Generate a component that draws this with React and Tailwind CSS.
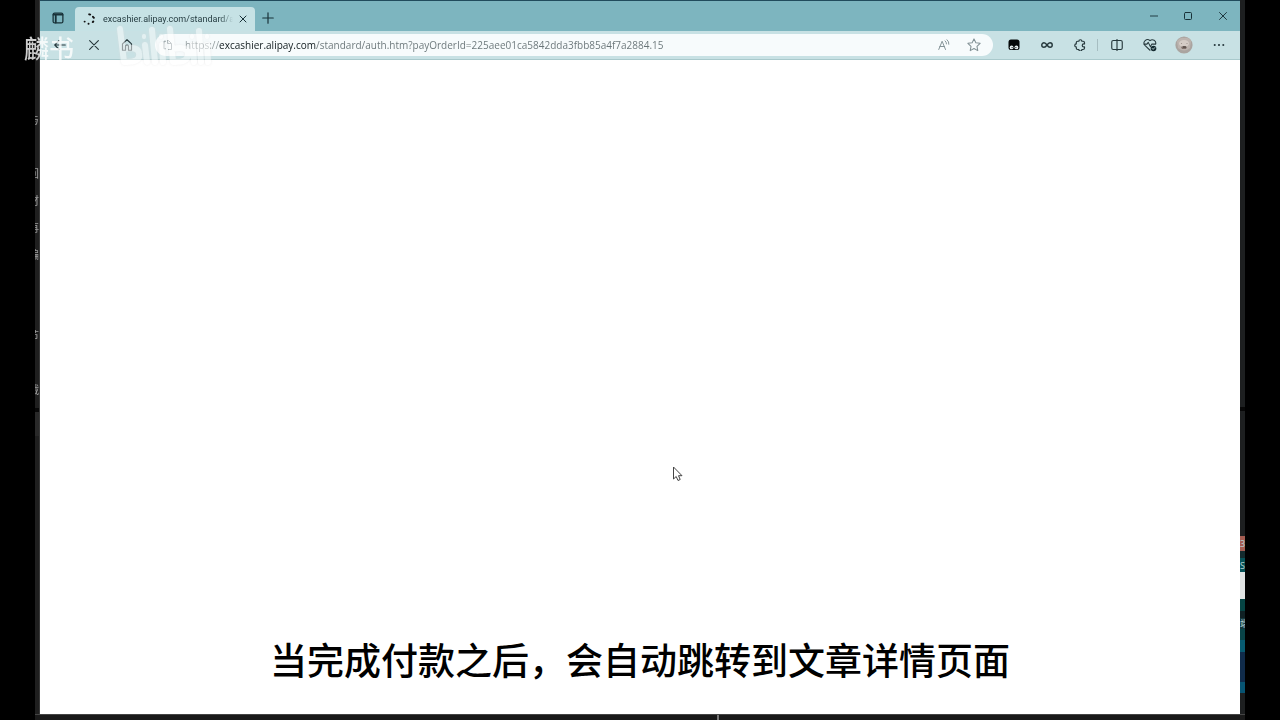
import React from "react";

const sideRows = ["与", "", "回", "材", "再", "骗", "", "", "节", "", "哦"];

function Icon({ size = "size-3.5", box = "0 0 16 16", children, width = 1.2 }) {
  return (
    <svg
      className={`${size} shrink-0`}
      viewBox={box}
      fill="none"
      stroke="currentColor"
      strokeWidth={width}
      strokeLinecap="round"
      strokeLinejoin="round"
      aria-hidden="true"
    >
      {children}
    </svg>
  );
}

function IconButton({ label, className = "w-[34px]", children }) {
  return (
    <button type="button" aria-label={label} className={`flex h-full shrink-0 items-center justify-center ${className}`}>
      {children}
    </button>
  );
}

function LeftEdge() {
  return (
    <aside className="flex w-[5px] shrink-0 flex-col overflow-hidden border-r border-[#383838] bg-[#1f1f1f] pt-[107px] text-[11px] text-[#aaa]">
      {sideRows.map((text, i) => (
        <span key={i} className="flex h-[27px] shrink-0 items-center justify-end opacity-90">
          {text}
        </span>
      ))}
      <span className="mt-1 h-1 shrink-0 bg-[#080808]" />
      <span className="h-6 shrink-0 bg-[#292929]" />
    </aside>
  );
}

function RightEdge() {
  return (
    <aside className="flex w-[5px] shrink-0 flex-col overflow-hidden bg-[#1d1f20] text-[9px] leading-none text-[#b7d3d2]">
      <span className="h-[411px] shrink-0 border-b-4 border-[#070707]" />
      <span className="h-[125px] shrink-0" />
      <span className="flex h-[15px] shrink-0 items-center bg-[#a45d52]">3</span>
      <span className="h-[7px] shrink-0 bg-[#142b2e]" />
      <span className="flex h-[14px] shrink-0 items-center bg-[#075257]">S</span>
      <span className="h-[27px] shrink-0 bg-[#dfe2e2]" />
      <span className="h-[12px] shrink-0 bg-[#064443]" />
      <span className="h-[7px] shrink-0 bg-[#102124]" />
      <span className="flex h-[11px] shrink-0 items-center bg-[#15383c]">端</span>
      <span className="h-[11px] shrink-0 bg-[#094347]" />
      <span className="h-[12px] shrink-0 bg-[#075a70]" />
      <span className="h-[30px] shrink-0 bg-[#102b4a]" />
      <span className="h-[11px] shrink-0 bg-[#075472]" />
    </aside>
  );
}

function TabBar() {
  return (
    <header className="flex h-[31px] shrink-0 items-end border-t border-[#214b5c] bg-[#7db5bf] text-[#193239]">
      <IconButton label="Tab actions" className="w-[35px] pt-1">
        <Icon size="size-3" width={1.7}>
          <rect x="1.5" y="1.5" width="13" height="13" rx="2" />
          <path d="M2 3.6h12M5 5v9" strokeWidth="2.4" />
        </Icon>
      </IconButton>
      <div className="flex h-6 w-[180px] items-center rounded-t bg-[#c6e2e5] pl-2">
        <svg className="size-3 shrink-0" viewBox="0 0 12 12" fill="none" stroke="#111" strokeWidth="1.9" strokeLinecap="round" aria-hidden="true">
          <path d="M6.2 1.3l1 .3M10 3.8l.9 1M10.3 8.4l-.5.7M5.500 10.8h.1M1.6 8.6h.1" />
        </svg>
        <span className="ml-2 w-[130px] overflow-hidden bg-linear-to-r from-[#20373c] from-90% to-[#c6e2e5] bg-clip-text font-['Roboto',sans-serif] text-[9px] leading-4 whitespace-nowrap text-transparent">
          excashier.alipay.com/standard/auth.htm
        </span>
        <IconButton label="Close tab" className="ml-1 w-3">
          <Icon size="size-2" width={2}>
            <path d="M2 2l12 12M14 2L2 14" />
          </Icon>
        </IconButton>
      </div>
      <IconButton label="New tab" className="w-[26px] pt-1">
        <Icon size="size-3" width={1.6}>
          <path d="M8 1v14M1 8h14" />
        </Icon>
      </IconButton>
      <div className="ml-auto flex h-full">
        <IconButton label="Minimize" className="w-[35px]">
          <Icon size="size-2" width={1.8}>
            <path d="M0 8h16" />
          </Icon>
        </IconButton>
        <IconButton label="Maximize" className="w-[34px]">
          <Icon size="size-2" width={2}>
            <rect x="1" y="1" width="14" height="14" rx="2" />
          </Icon>
        </IconButton>
        <IconButton label="Close window" className="w-[35px]">
          <Icon size="size-2" width={1.9}>
            <path d="M1 1l14 14M15 1L1 15" />
          </Icon>
        </IconButton>
      </div>
    </header>
  );
}

function Toolbar() {
  return (
    <nav className="flex h-[29px] shrink-0 items-center border-b border-[#a9c9cc] bg-[#c8e1e4] pl-[3px] text-[#26383c]">
      <IconButton label="Back">
        <Icon size="size-3" width={1.5}>
          <path d="M15 8H1M7 2L1 8l6 6" />
        </Icon>
      </IconButton>
      <IconButton label="Stop" className="w-[33px]">
        <Icon size="size-2.5" width={1.8}>
          <path d="M1 1l14 14M15 1L1 15" />
        </Icon>
      </IconButton>
      <IconButton label="Home" className="w-[33px]">
        <Icon size="size-3" width={1.6}>
          <path d="M2 6.5L8 1l6 5.5V15h-4v-5a2 2 0 0 0-4 0v5H2z" />
        </Icon>
      </IconButton>
      <div className="ml-3 flex h-[22px] min-w-0 flex-1 items-center rounded-full bg-[#f7fbfc] pl-1.5">
        <Icon size="size-3" width={1.3}>
          <path d="M6 3H4v10h2M9 2h1l4 4v8h-4M9 2v4h4" stroke="#8d999c" />
        </Icon>
        <label htmlFor="address" className="sr-only">Address</label>
        <input
          id="address"
          readOnly
          defaultValue="https://excashier.alipay.com/standard/auth.htm?payOrderId=225aee01ca5842dda3fbb85a4f7a2884.15"
          className="ml-3 h-full min-w-0 flex-1 bg-[linear-gradient(to_right,#8f999b_34px,#101b1e_34px,#101b1e_131px,#687477_131px)] bg-clip-text text-[10px] text-transparent outline-none"
        />
        <IconButton label="Read aloud" className="w-[30px]">
          <Icon size="size-3" width={1.3}>
            <path d="M1 14L5.5 3 10 14M2.5 10h6M9.5 2.5q2 1.5 1.8 4M12 1q3 2.5 2.5 6" stroke="#829195" />
          </Icon>
        </IconButton>
        <IconButton label="Add to favorites" className="mr-1 w-[30px]">
          <Icon width={1.2}>
            <path d="M8 1l2.1 4.5 4.9.6-3.6 3.4.9 4.9L8 12l-4.3 2.4.9-4.9L1 6.1l4.9-.6z" stroke="#829195" />
          </Icon>
        </IconButton>
      </div>
      <IconButton label="Tampermonkey" className="ml-1 w-[34px]">
        <svg className="size-3" viewBox="0 0 12 12" aria-hidden="true">
          <rect x="0.5" y="0.5" width="11" height="10.5" rx="2.5" fill="#050909" />
          <circle cx="3.6" cy="8.4" r="1.9" fill="#e7f1f1" />
          <circle cx="8.4" cy="8.4" r="1.9" fill="#e7f1f1" />
          <circle cx="4.1" cy="8.6" r=".6" />
          <circle cx="7.9" cy="8.6" r=".6" />
        </svg>
      </IconButton>
      <IconButton label="Infinity extension" className="w-8">
        <Icon size="size-3" width={1.9}>
          <path d="M8 8C6.5 5.8 5.5 5 4 5a3 3 0 0 0 0 6c1.5 0 2.5-.8 4-3s2.5-3 4-3a3 3 0 0 1 0 6c-1.5 0-2.5-.8-4-3z" />
        </Icon>
      </IconButton>
      <IconButton label="Extensions" className="w-[34px]">
        <Icon size="size-3" width={1.6}>
          <path d="M3 5a2 2 0 0 1 2-2h1.500a2 2 0 0 1 4 0H12a2 2 0 0 1 2 2v1.500h-1a1.800 1.800 0 0 0 0 4h1V12a2 2 0 0 1-2 2h-1.500a2 2 0 0 1-4 0H5a2 2 0 0 1-2-2v-1.500a2 2 0 0 1 0-4z" />
        </Icon>
      </IconButton>
      <span className="h-3 w-px bg-[#a6bdc1]" />
      <IconButton label="Split screen" className="ml-0.5 w-[33px]">
        <Icon size="size-3" width={1.5}>
          <path d="M7 2H3a2 2 0 0 0-2 2v8a2 2 0 0 0 2 2h4M9 2h4a2 2 0 0 1 2 2v8a2 2 0 0 1-2 2H9M8 .5v15" />
        </Icon>
      </IconButton>
      <IconButton label="Browser essentials">
        <Icon size="size-3.5" width={1.2}>
          <path d="M8 14L2.2 8.5A4 4 0 0 1 8 3a4 4 0 0 1 6.5 4M1 7h3.5L6 5l2.5 5L10 7h4" />
          <circle cx="12" cy="12" r="3.2" fill="#142a30" stroke="none" />
          <path d="M10.6 12l1 1 1.800-2" stroke="#c8e1e4" strokeWidth="1" />
        </Icon>
      </IconButton>
      <IconButton label="Profile">
        <svg className="size-[18px]" viewBox="0 0 18 18" aria-hidden="true">
          <circle cx="9" cy="9" r="8.6" fill="#aaa4a0" />
          <path d="M2 5q3-4 7-3 5-1 7 3l-1 7q-6 5-12 0z" fill="#bdb4af" />
          <ellipse cx="9" cy="7.5" rx="5" ry="3.5" fill="#d5ccc6" />
          <path d="M6 11q3-2 6 0l-1 2H7z" fill="#82736d" />
          <path d="M8 10.5h3v1H8z" fill="#413633" />
          <circle cx="6.5" cy="7.5" r=".6" fill="#9b908a" />
          <circle cx="12" cy="7.5" r=".6" fill="#9b908a" />
        </svg>
      </IconButton>
      <IconButton label="Settings and more" className="mr-1 w-[35px]">
        <Icon size="size-3">
          <g fill="currentColor" stroke="none">
            <circle cx="2.3" cy="8" r="1.4" />
            <circle cx="8" cy="8" r="1.4" />
            <circle cx="13.7" cy="8" r="1.4" />
          </g>
        </Icon>
      </IconButton>
    </nav>
  );
}

function Watermark() {
  return (
    <div className="pointer-events-none absolute top-[26px] left-6 flex items-center text-white">
      <span className="text-[25px] leading-[44px] font-medium opacity-80">麟书</span>
      <svg className="ml-[42px] h-11 w-24 opacity-50 drop-shadow-[0_0_1px_#ddd]" viewBox="0 0 96 44" fill="none" stroke="white" strokeWidth="6" strokeLinecap="round" strokeLinejoin="round" role="img" aria-label="bilibili">
        <path d="M4 3l4 33q17 1 15-9-1-7-15-4M29 19l2 17M36 4l3 32M46 19l1 17M54 3l3 33q16 1 15-9-1-7-15-4M77 19l1 17M83 5l2 31M91 19l1 17" />
        <path d="M28 10v1M45 10v1M76 10v1M91 10v1" strokeWidth="4" />
      </svg>
    </div>
  );
}

export default function App() {
  return (
    <div className="relative flex min-h-screen flex-col overflow-hidden bg-black px-[35px] font-['Open_Sans','Noto_Sans_CJK_SC',sans-serif]">
      <div className="flex flex-1">
        <LeftEdge />
        <div className="flex min-w-0 flex-1 flex-col">
          <TabBar />
          <Toolbar />
          <main className="flex flex-1 flex-col items-center justify-end bg-white pb-[25px]">
            <p className="text-[37px] leading-[56px] font-medium whitespace-nowrap text-black">
              当完成付款之后，会自动跳转到文章详情页面
            </p>
          </main>
        </div>
        <RightEdge />
      </div>
      <footer className="flex h-1.5 shrink-0 justify-center border-t border-[#444] bg-[#191919]">
        <span className="ml-[156px] h-full w-0.5 bg-[#777]" />
      </footer>
      <svg className="pointer-events-none absolute top-[466px] left-[672px] h-4 w-3" viewBox="0 0 12 16" fill="white" stroke="#444" strokeWidth="1" strokeLinejoin="round" aria-hidden="true">
        <path d="M1.5 1v12l2.7-2.5L6 14.5l2.2-1-1.7-3.8H10z" />
      </svg>
      <Watermark />
    </div>
  );
}
